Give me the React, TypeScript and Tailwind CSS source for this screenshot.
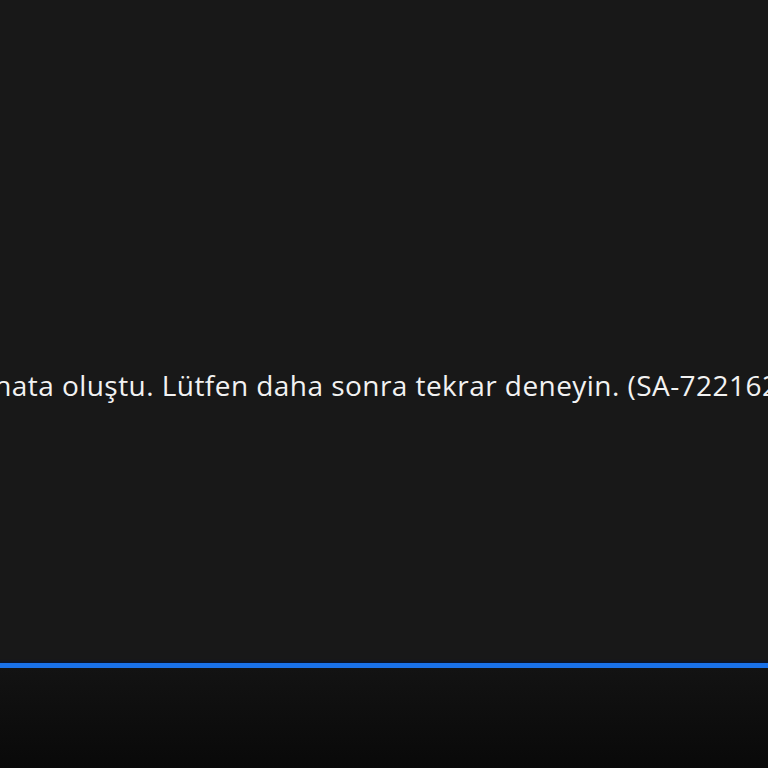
import React from "react";

export default function App() {
  return (
    <div className="flex h-[768px] w-[768px] flex-col overflow-hidden bg-[#181818]" style={{ fontFamily: '"Open Sans", "Noto Sans", sans-serif' }}>
      <div className="flex h-[663px] justify-center overflow-hidden pt-[365px] pr-[16px]">
        <p className="whitespace-nowrap text-[28px] leading-[40px] tracking-[0.45px] text-[#f2f2f2]">
          Bir hata oluştu. Lütfen daha sonra tekrar deneyin. (SA-7221620)
        </p>
      </div>
      <div className="h-[5px] bg-[#1a72ea] shadow-[0_0_3px_1px_rgba(0,20,60,0.9)]" />
      <div className="flex-1 bg-gradient-to-b from-[#131313] to-[#090909]" />
    </div>
  );
}
